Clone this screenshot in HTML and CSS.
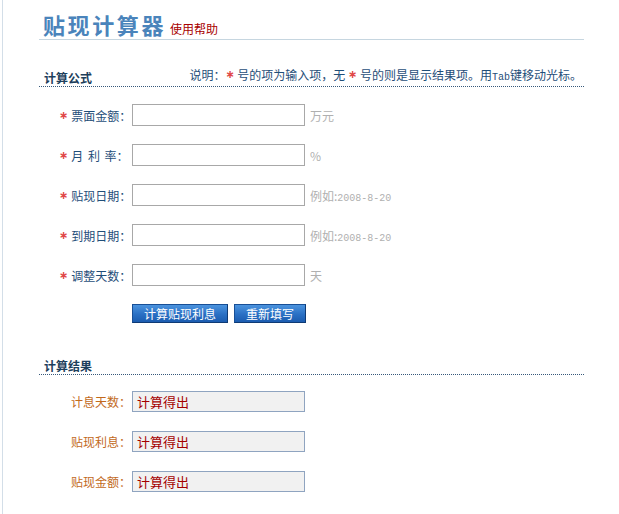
FILE: index.html
```html
<!DOCTYPE html>
<html lang="zh">
<head>
<meta charset="utf-8">
<title>贴现计算器</title>
<link rel="stylesheet" href="styles.css">
</head>
<body>
<div class="frame">
  <div class="page">
    <div class="title-bar">
      <span class="title">贴现计算器</span>
      <a class="help" href="#">使用帮助</a>
    </div>

    <div class="section-head">
      <span class="section-name">计算公式</span>
      <span class="note">说明：<span class="star">∗</span> 号的项为输入项，无 <span class="star">∗</span> 号的则是显示结果项。用<span class="mono">Tab</span>键移动光标。</span>
    </div>

    <div class="form">
      <div class="row">
        <label class="label"><span class="star">∗</span>票面金额：</label>
        <input class="field" type="text">
        <span class="unit">万元</span>
      </div>
      <div class="row">
        <label class="label spaced"><span class="star">∗</span>月 利 率：</label>
        <input class="field" type="text">
        <span class="unit">%</span>
      </div>
      <div class="row">
        <label class="label"><span class="star">∗</span>贴现日期：</label>
        <input class="field" type="text">
        <span class="unit">例如:<span class="mono">2008-8-20</span></span>
      </div>
      <div class="row">
        <label class="label"><span class="star">∗</span>到期日期：</label>
        <input class="field" type="text">
        <span class="unit">例如:<span class="mono">2008-8-20</span></span>
      </div>
      <div class="row">
        <label class="label"><span class="star">∗</span>调整天数：</label>
        <input class="field" type="text">
        <span class="unit">天</span>
      </div>
      <div class="buttons">
        <button class="btn btn-calc" type="button">计算贴现利息</button>
        <button class="btn btn-reset" type="button">重新填写</button>
      </div>
    </div>

    <div class="section-head result-head">
      <span class="section-name">计算结果</span>
    </div>

    <div class="results">
      <div class="row rrow">
        <label class="label rlabel">计息天数：</label>
        <div class="out">计算得出</div>
      </div>
      <div class="row rrow">
        <label class="label rlabel">贴现利息：</label>
        <div class="out">计算得出</div>
      </div>
      <div class="row rrow">
        <label class="label rlabel">贴现金额：</label>
        <div class="out">计算得出</div>
      </div>
    </div>
  </div>
</div>
</body>
</html>
```

FILE: styles.css
```css
html, body {
  margin: 0;
  padding: 0;
  background: #ffffff;
}

body {
  font-family: "Noto Sans CJK SC", "Liberation Sans", sans-serif;
  font-size: 12px;
  color: #1f4e79;
}

.frame {
  margin-left: 2px;
  border-left: 1px solid #d3dee8;
  min-height: 514px;
  box-sizing: border-box;
}

.page {
  margin-left: 36px;
  width: 545px;
}

.title-bar {
  padding-top: 11px;
  padding-bottom: 2px;
  border-bottom: 1px solid #c6d6e0;
  display: flex;
  align-items: baseline;
  padding-left: 4px;
  height: 26px;
}

.title {
  font-size: 22px;
  line-height: 26px;
  font-weight: bold;
  letter-spacing: 2.6px;
  color: #4a84bb;
}

.help {
  margin-left: 4px;
  font-size: 12px;
  color: #a80000;
  text-decoration: none;
}

.section-head {
  margin-top: 30px;
  height: 16px;
  border-bottom: 1px dotted #36587a;
  display: flex;
  align-items: flex-end;
  padding-left: 5px;
  padding-right: 2px;
}

.section-name {
  font-size: 12px;
  line-height: 16px;
  font-weight: bold;
  color: #1e3f5c;
}

.note {
  margin-left: auto;
  line-height: 16px;
  color: #1f4e79;
}

.star {
  color: #e04848;
  font-family: "DejaVu Sans", sans-serif;
  font-weight: bold;
  font-size: 11px;
  position: relative;
  top: -2px;
}

.mono {
  font-family: "Liberation Mono", monospace;
  font-size: 10px;
  letter-spacing: 0;
}

.form {
  padding-top: 17px;
}

.row {
  display: flex;
  align-items: center;
  height: 22px;
  margin-bottom: 18px;
}

.label {
  box-sizing: border-box;
  width: 93px;
  padding-left: 20px;
  padding-right: 4px;
  white-space: nowrap;
  color: #1f4e79;
}

.label .star {
  margin-right: 3px;
}

.spaced {
  word-spacing: 2px;
}

.field {
  box-sizing: border-box;
  width: 173px;
  height: 22px;
  margin: 0;
  border: 1px solid #a8a8a8;
  background: #ffffff;
  padding: 0 3px;
}

.unit {
  margin-left: 5px;
  color: #b0b0b0;
  font-size: 12px;
}

.unit .mono {
  color: #b0b0b0;
}

.buttons {
  display: flex;
  gap: 6px;
  padding-left: 93px;
}

.btn {
  height: 19px;
  padding: 0;
  margin: 0;
  border: 1px solid #184f96;
  border-right-color: #0e3a74;
  border-bottom-color: #0e3a74;
  background: linear-gradient(#4b93de, #2a70c4 55%, #1b5cb0);
  color: #ffffff;
  font-family: "Noto Sans CJK SC", sans-serif;
  font-size: 12px;
  line-height: 16px;
}

.btn-calc {
  width: 96px;
}

.btn-reset {
  width: 72px;
}

.result-head {
  margin-top: 35px;
}

.results {
  padding-top: 16px;
}

.rrow {
  height: 21px;
  margin-bottom: 19px;
}

.rlabel {
  padding-left: 32px;
  color: #c26a1c;
}

.out {
  box-sizing: border-box;
  width: 173px;
  height: 21px;
  border: 1px solid #8fa4c0;
  background: #f1f1f1;
  color: #a40000;
  font-size: 13px;
  line-height: 19px;
  padding-left: 4px;
}
```
